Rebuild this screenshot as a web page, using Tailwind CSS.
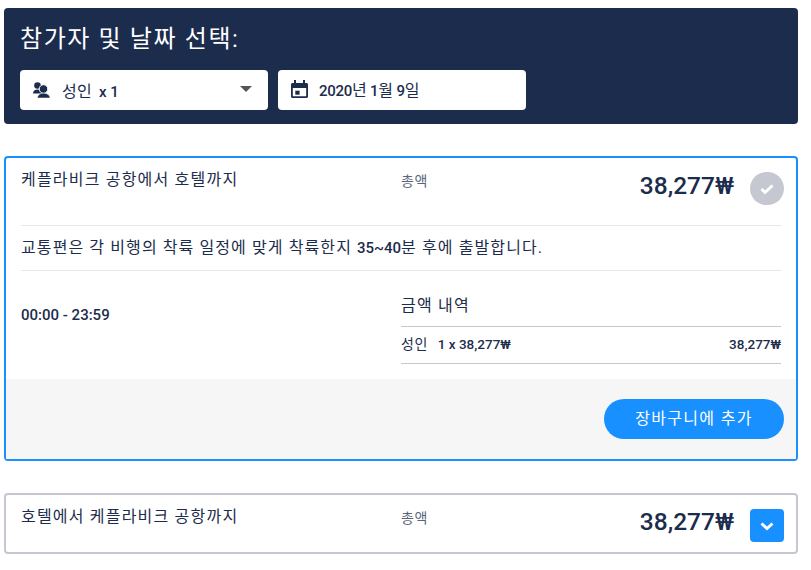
<!DOCTYPE html>
<html lang="ko">
<head>
<meta charset="UTF-8">
<title>참가자 및 날짜 선택</title>
<script src="https://cdn.jsdelivr.net/npm/@tailwindcss/browser@4"></script>
</head>
<body class="bg-white font-['Roboto','Noto_Sans_CJK_KR',sans-serif] text-[#1c2c4c]">
<div class="w-[794px] ml-1 pt-2">

    <!-- picker -->
    <div class="bg-[#1c2c4c] rounded-sm h-[116px] px-4 pt-[15px]">
        <h2 class="text-white text-[24px] tracking-[1.6px] leading-8 font-normal">참가자 및 날짜 선택:</h2>
        <div class="flex gap-[10px] mt-[15px]">
            <div class="w-[248px] h-10 bg-white rounded-sm flex items-center pl-[13px] pr-4">
                <svg class="w-[17px] h-4 mb-[1px]" viewBox="0 0 17 16" fill="#1c2c4c"><circle cx="4.500" cy="3.500" r="3.300"/><path d="M0 11.500c0-2.500 2-4 4.500-4s4.500 1.500 4.500 4z"/><circle cx="10.500" cy="7" r="4.300" stroke="#fff" stroke-width="1"/><path d="M4.500 16c0-3 2.500-4.800 6-4.800s6.500 1.800 6.500 4.800z" stroke="#fff" stroke-width="0.500"/></svg>
                <span class="ml-3 mt-[3px] text-[16px] tracking-[0.3px]">성인<span class="font-medium text-[15px] tracking-normal ml-[7px]">x 1</span></span>
                <span class="ml-auto mb-[2px] w-0 h-0 border-x-[6px] border-x-transparent border-t-[6px] border-t-[#555]"></span>
            </div>
            <div class="w-[248px] h-10 bg-white rounded-sm flex items-center pl-[13px]">
                <svg class="w-[17px] h-[18px] mb-[2px]" viewBox="0 0 17 18" fill="#1c2c4c"><path d="M3 0h2v3h7V0h2v3h1.500c.8 0 1.500.7 1.500 1.500v12c0 .8-.7 1.500-1.500 1.500h-14C.7 18 0 17.300 0 16.500v-12C0 3.700.7 3 1.500 3H3zM1.800 8v8.200h13.400V8z"/><rect x="4.300" y="10.700" width="4.300" height="4"/></svg>
                <span class="ml-[11px] mt-[2px] text-[15px] font-medium tracking-[-0.3px]">2020<span class="font-normal text-[16px] tracking-normal">년</span> 1<span class="font-normal text-[16px] tracking-normal">월</span> 9<span class="font-normal text-[16px] tracking-normal">일</span></span>
            </div>
        </div>
    </div>

    <!-- open card -->
    <div class="mt-8 h-[305px] border-2 border-[#1890ff] rounded-sm flex flex-col">
        <div class="px-[15px] flex-1">
            <div class="flex h-[68px] border-b border-[#e6e6e6]">
                <div class="w-[380px] pt-[10px] text-[16px] tracking-[1.2px] leading-6">케플라비크 공항에서 호텔까지</div>
                <div class="w-[380px] flex">
                    <div class="pt-[13px] text-[14px] tracking-[0.5px] leading-5 text-[#5a6577]">총액</div>
                    <div class="ml-auto mt-[12px] h-8 flex items-center text-[24.500px] font-medium">38,277₩</div>
                    <div class="ml-4 mt-[14px] mr-[-3px] w-[34px] h-[33px] rounded-full bg-[#c5c8d0] flex items-center justify-center">
                        <svg class="w-[14px] h-[14px]" viewBox="0 0 14 14" fill="none" stroke="#fff" stroke-width="3"><path d="M1.500 7l3.500 3.500 7.500-7"/></svg>
                    </div>
                </div>
            </div>
            <div class="h-[45px] border-b border-[#e6e6e6] flex items-center text-[16px] tracking-[1.100px]"><span class="whitespace-pre">교통편은 각 비행의 착륙 일정에 맞게 착륙한지 </span><span class="font-medium tracking-normal text-[15px]">35~40</span><span class="whitespace-pre">분 후에 출발합니다.</span></div>
            <div class="flex">
                <div class="w-[380px] pt-[34px] text-[15px] leading-5 font-medium">00:00 - 23:59</div>
                <div class="w-[380px]">
                    <div class="h-[56px] pt-[23px] text-[16px] tracking-[1.200px] leading-6 border-b border-[#c5c8d0]">금액 내역</div>
                    <div class="h-[37px] pb-[2px] flex items-center justify-between border-b border-[#c5c8d0] text-[13.500px]">
                        <span class="flex items-center"><span class="text-[14px] tracking-[0.5px]">성인</span><span class="ml-[10px] font-medium">1 x 38,277₩</span></span>
                        <span class="font-medium">38,277₩</span>
                    </div>
                </div>
            </div>
        </div>
        <div class="h-20 bg-[#f6f6f6] flex items-center justify-end pr-3">
            <button class="w-[180px] h-10 rounded-full bg-[#1890ff] text-white text-[16px] tracking-[1.300px]">장바구니에 추가</button>
        </div>
    </div>

    <!-- closed card -->
    <div class="mt-8 h-[61px] border-2 border-[#c5c8d0] rounded-sm px-[15px] flex">
        <div class="w-[380px] pt-[10px] text-[16px] tracking-[1.200px] leading-6">호텔에서 케플라비크 공항까지</div>
        <div class="w-[380px] flex">
            <div class="pt-[13px] text-[14px] tracking-[0.5px] leading-5 text-[#5a6577]">총액</div>
            <div class="ml-auto mt-[11px] h-8 flex items-center text-[24.500px] font-medium">38,277₩</div>
            <div class="ml-4 mt-[14px] mr-[-3px] w-[34px] h-[33px] rounded-sm bg-[#1890ff] flex items-center justify-center">
                <svg class="w-[14px] h-[14px]" viewBox="0 0 14 14" fill="none" stroke="#fff" stroke-width="3"><path d="M1.500 4.500l5.500 5 5.500-5"/></svg>
            </div>
        </div>
    </div>
</div>
</body>
</html>
